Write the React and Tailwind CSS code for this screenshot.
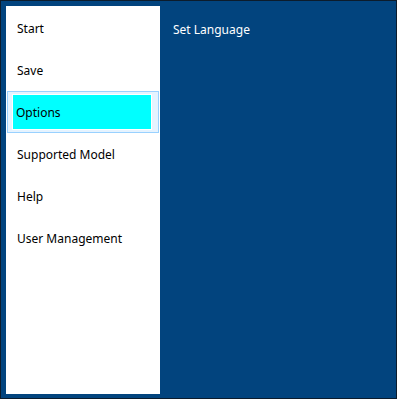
import React, { useState } from "react"

const ITEMS = ["Start", "Save", "Options", "Supported Model", "Help", "User Management"]

export default function App() {
	const [selected, setSelected] = useState("Options")

	return (
		<div className="w-[397px] h-[399px] border border-[#0c1c2c] bg-[#02447e] p-[5px] flex gap-[13px] font-['Noto_Sans',sans-serif] text-[12px]">
			<div className="w-[154px] h-[388px] bg-white pt-px pl-px">
				{ITEMS.map((item) =>
					item === selected ? (
						<div key={item} className="w-[152px] h-[42px] border border-[#99d1ff] bg-[#e5f3ff] pl-[4px] pr-[6px] py-[2px]">
							<div className="h-[36px] border border-white bg-[#00ffff] flex items-center pl-[3px] pt-[2px] text-black">
								{item}
							</div>
						</div>
					) : (
						<div key={item} onClick={() => setSelected(item)} className="w-[152px] h-[42px] flex items-center pl-[10px] pt-[2px] text-black cursor-default">
							{item}
						</div>
					)
				)}
			</div>
			<div className="pt-[15px] text-white">Set Language</div>
		</div>
	)
}
